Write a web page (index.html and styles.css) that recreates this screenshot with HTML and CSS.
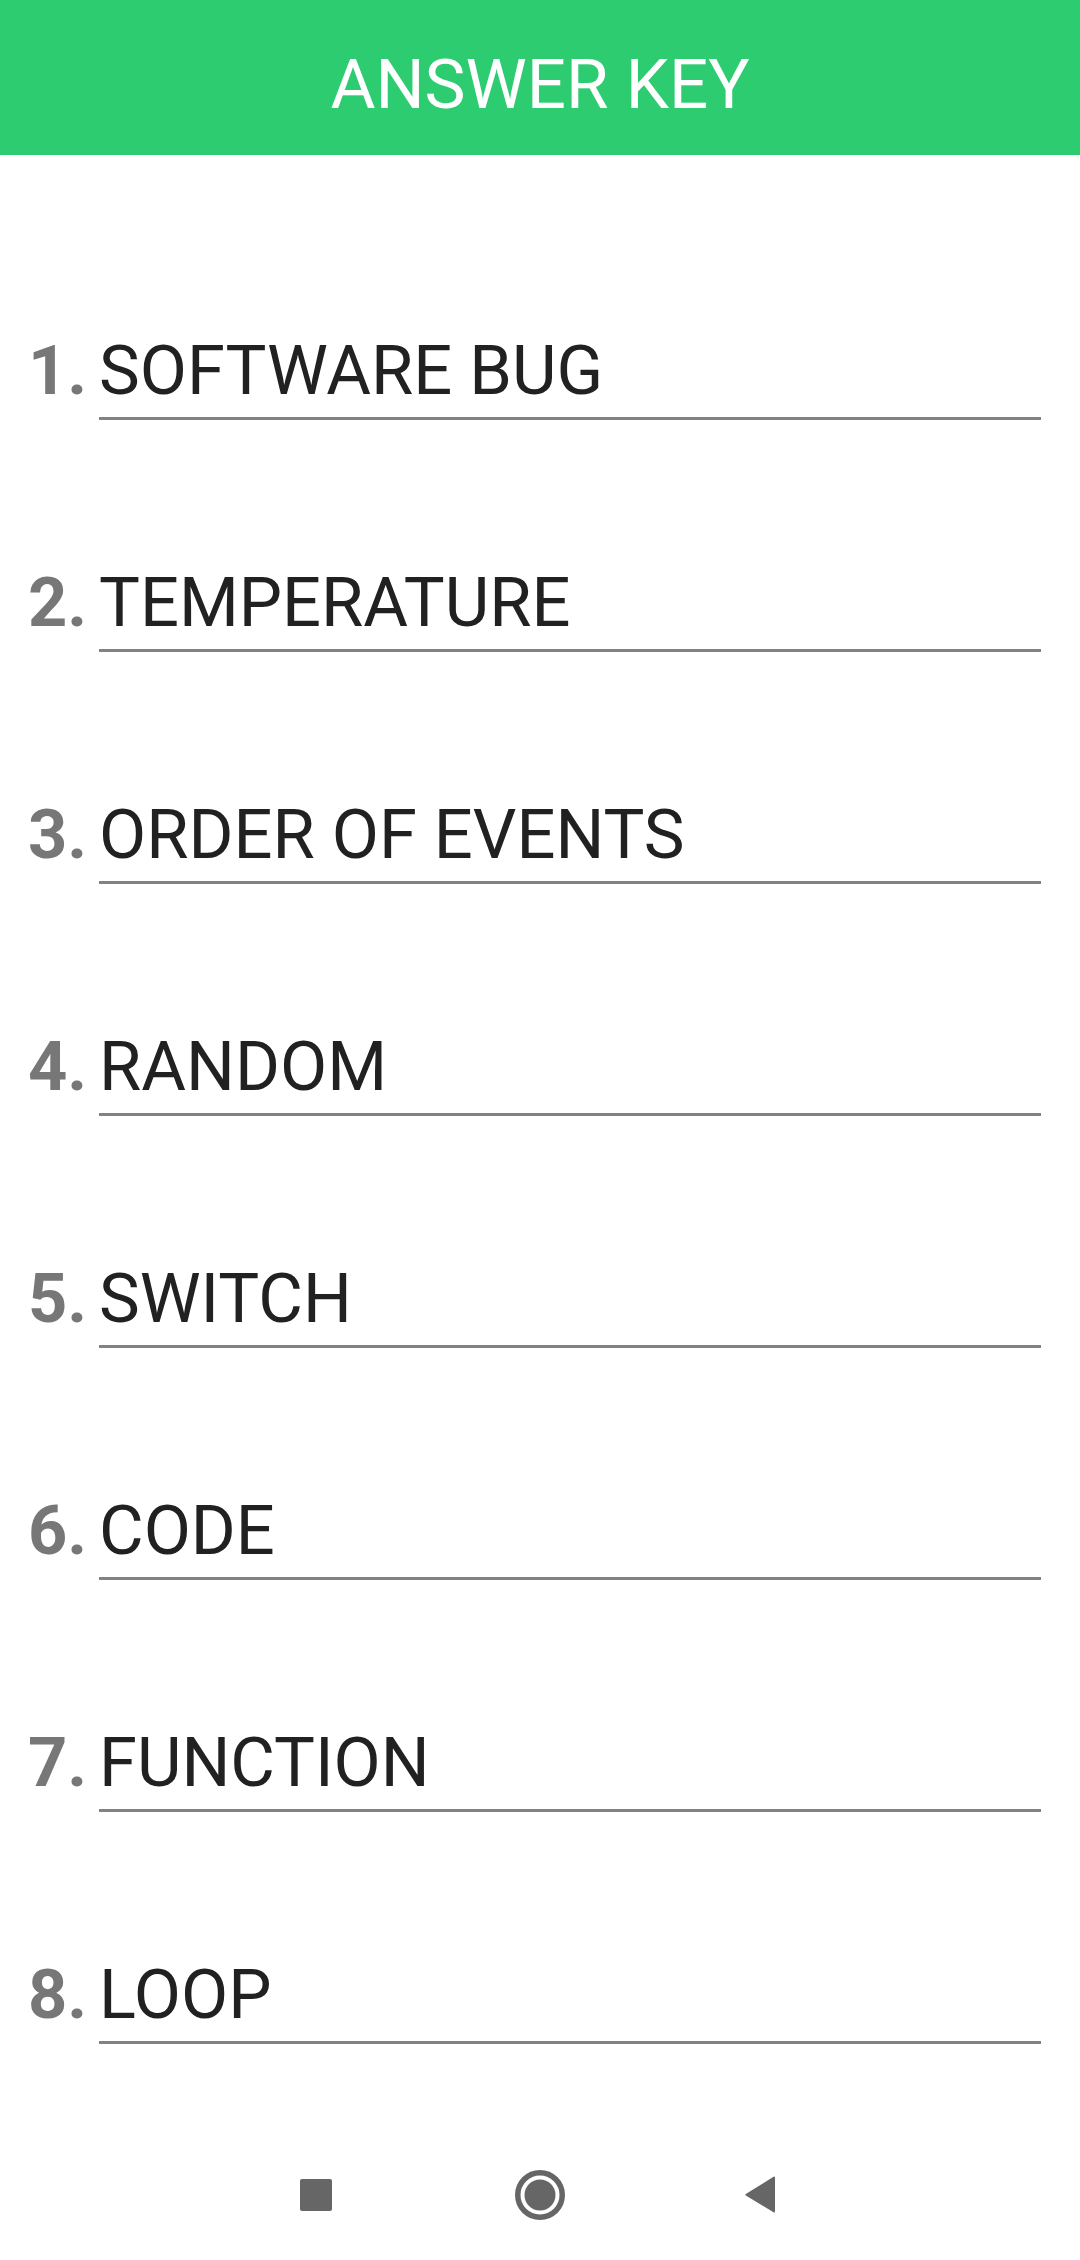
FILE: index.html
```html
<!DOCTYPE html>
<html lang="en">
<head>
<meta charset="utf-8">
<title>Answer Key</title>
<link rel="stylesheet" href="styles.css">
</head>
<body>
<div class="screen">
  <header class="appbar">
    <h1 class="appbar-title">ANSWER KEY</h1>
  </header>
  <main class="list">
    <div class="row"><span class="num">1.</span><div class="field">SOFTWARE BUG</div></div>
    <div class="row"><span class="num">2.</span><div class="field">TEMPERATURE</div></div>
    <div class="row"><span class="num">3.</span><div class="field">ORDER OF EVENTS</div></div>
    <div class="row"><span class="num">4.</span><div class="field">RANDOM</div></div>
    <div class="row"><span class="num">5.</span><div class="field">SWITCH</div></div>
    <div class="row"><span class="num">6.</span><div class="field">CODE</div></div>
    <div class="row"><span class="num">7.</span><div class="field">FUNCTION</div></div>
    <div class="row"><span class="num">8.</span><div class="field">LOOP</div></div>
  </main>
  <nav class="navbar">
    <div class="nav-slot"><span class="nav-square"></span></div>
    <div class="nav-slot">
      <svg class="nav-icon" width="50" height="50" viewBox="0 0 50 50">
        <circle cx="25" cy="25" r="22.25" fill="none" stroke="#666666" stroke-width="5.5"/>
        <circle cx="25" cy="25" r="15.5" fill="#666666"/>
      </svg>
    </div>
    <div class="nav-slot">
      <svg class="nav-icon" width="40" height="40" viewBox="0 0 40 40">
        <path d="M29.5 1.8 Q31 1 31 2.8 L31 36.2 Q31 38 29.5 37.2 L1.8 20.4 Q1 19.7 1.8 19 Z" fill="#666666"/>
      </svg>
    </div>
  </nav>
</div>
</body>
</html>
```

FILE: styles.css
```css
* {
  box-sizing: border-box;
}

html, body {
  margin: 0;
  padding: 0;
  background: #ffffff;
}

body {
  font-family: Roboto, "Liberation Sans", sans-serif;
}

.screen {
  width: 1080px;
  height: 2260px;
  display: flex;
  flex-direction: column;
  background: #ffffff;
}

.appbar {
  height: 155px;
  flex: 0 0 155px;
  background: #2ecc71;
  padding-top: 44px;
}

.appbar-title {
  margin: 0;
  text-align: center;
  color: #ffffff;
  font-weight: 400;
  font-size: 69px;
  line-height: 81px;
}

.list {
  flex: 1;
  display: flex;
  flex-direction: column;
  gap: 142px;
  padding-top: 175px;
}

.row {
  display: flex;
  align-items: flex-start;
  padding-left: 28px;
  padding-right: 39px;
}

.num {
  flex: 0 0 71px;
  font-size: 68.6px;
  line-height: 81px;
  font-weight: 700;
  color: #777777;
}

.field {
  flex: 1;
  font-size: 68.6px;
  line-height: 81px;
  color: #212121;
  padding-bottom: 6px;
  border-bottom: 3px solid #828282;
}

.navbar {
  flex: 0 0 130px;
  height: 130px;
  display: flex;
  justify-content: center;
  align-items: center;
}

.nav-slot {
  width: 224px;
  display: flex;
  justify-content: center;
  align-items: center;
}

.nav-square {
  display: block;
  width: 32px;
  height: 32px;
  border-radius: 2px;
  background: #666666;
}

.nav-icon {
  display: block;
}
```
